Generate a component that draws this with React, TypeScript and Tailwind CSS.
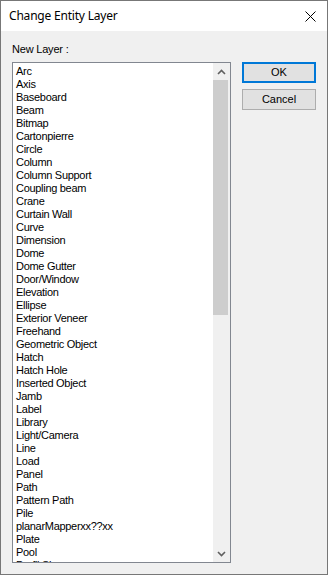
import React from 'react';

const LAYERS = [
  'Arc', 'Axis', 'Baseboard', 'Beam', 'Bitmap', 'Cartonpierre', 'Circle', 'Column',
  'Column Support', 'Coupling beam', 'Crane', 'Curtain Wall', 'Curve', 'Dimension',
  'Dome', 'Dome Gutter', 'Door/Window', 'Elevation', 'Ellipse', 'Exterior Veneer',
  'Freehand', 'Geometric Object', 'Hatch', 'Hatch Hole', 'Inserted Object', 'Jamb',
  'Label', 'Library', 'Light/Camera', 'Line', 'Load', 'Panel', 'Path', 'Pattern Path',
  'Pile', 'planarMapperxx??xx', 'Plate', 'Pool', 'Profil Shape',
];

function Chevron({ up }: { up?: boolean }) {
  return (
    <svg width="9" height="6" viewBox="0 0 9 6" className="block">
      <path
        d={up ? 'M1 5 L4.5 1.5 L8 5' : 'M1 1 L4.5 4.5 L8 1'}
        fill="none"
        stroke="#606060"
        strokeWidth="1.6"
      />
    </svg>
  );
}

export default function App() {
  return (
    <div
      className="w-[328px] h-[575px] border border-[#777777] bg-[#f0f0f0] flex flex-col text-black"
      style={{ fontFamily: '"Liberation Sans", Arial, sans-serif' }}
    >
      {/* title bar */}
      <div className="h-[30px] bg-white flex items-center justify-between pl-[8px] pr-[11px] shrink-0">
        <span className="text-[12px] tracking-[-0.2px]" style={{ fontFamily: '"Noto Sans", "Liberation Sans", sans-serif' }}>
          Change Entity Layer
        </span>
        <svg width="11" height="11" viewBox="0 0 11 11">
          <path d="M0.5 0.5 L10.5 10.5 M10.5 0.5 L0.5 10.5" stroke="#000" strokeWidth="1" />
        </svg>
      </div>

      <div className="flex pl-[11px] gap-[11px]">
        <div className="flex flex-col">
          <div className="pt-[12px] h-[31px] text-[11px] leading-[13px] tracking-[-0.2px]">New Layer :</div>
          <div className="w-[219px] h-[501px] border border-[#828790] bg-white flex overflow-hidden">
            <ul className="flex-1 pt-[2px] pl-[3px] overflow-hidden">
              {LAYERS.map(name => (
                <li key={name} className="h-[13px] leading-[13px] text-[11px] tracking-[-0.3px] whitespace-nowrap">
                  {name}
                </li>
              ))}
            </ul>
            <div className="w-[17px] bg-[#f0f0f0] flex flex-col shrink-0">
              <div className="h-[17px] flex items-center justify-center"><Chevron up /></div>
              <div className="flex-1 flex flex-col">
                <div className="h-[235px] mr-[2px] bg-[#cdcdcd]" />
              </div>
              <div className="h-[17px] flex items-center justify-center"><Chevron /></div>
            </div>
          </div>
        </div>

        <div className="flex flex-col pt-[31px] gap-[6px]">
          <button className="w-[74px] h-[21px] border-2 border-[#0078d7] bg-[#e1e1e1] text-[11px] leading-none">
            OK
          </button>
          <button className="w-[74px] h-[21px] border border-[#adadad] bg-[#e1e1e1] text-[11px] leading-none">
            Cancel
          </button>
        </div>
      </div>
    </div>
  );
}
